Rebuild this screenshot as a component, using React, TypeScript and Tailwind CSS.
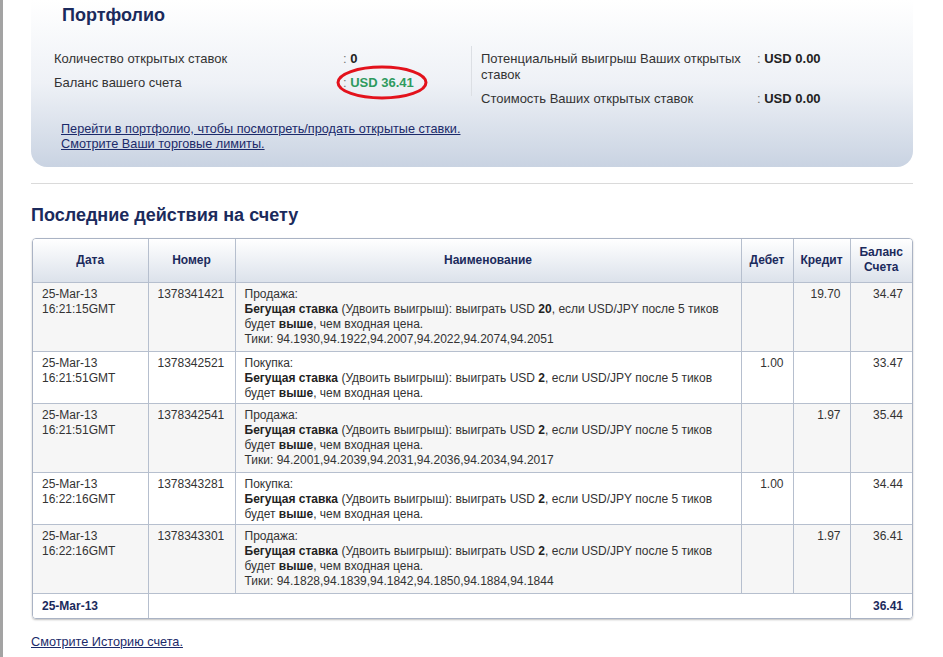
import React from 'react';

type Activity = {
  date: string;
  time: string;
  ref: string;
  action: string;
  payout: string;
  ticks?: string;
  debit?: string;
  credit?: string;
  balance: string;
};

const activities: Activity[] = [
  {
    date: '25-Mar-13',
    time: '16:21:15GMT',
    ref: '1378341421',
    action: 'Продажа:',
    payout: '20',
    ticks: '94.1930,94.1922,94.2007,94.2022,94.2074,94.2051',
    credit: '19.70',
    balance: '34.47',
  },
  {
    date: '25-Mar-13',
    time: '16:21:51GMT',
    ref: '1378342521',
    action: 'Покупка:',
    payout: '2',
    debit: '1.00',
    balance: '33.47',
  },
  {
    date: '25-Mar-13',
    time: '16:21:51GMT',
    ref: '1378342541',
    action: 'Продажа:',
    payout: '2',
    ticks: '94.2001,94.2039,94.2031,94.2036,94.2034,94.2017',
    credit: '1.97',
    balance: '35.44',
  },
  {
    date: '25-Mar-13',
    time: '16:22:16GMT',
    ref: '1378343281',
    action: 'Покупка:',
    payout: '2',
    debit: '1.00',
    balance: '34.44',
  },
  {
    date: '25-Mar-13',
    time: '16:22:16GMT',
    ref: '1378343301',
    action: 'Продажа:',
    payout: '2',
    ticks: '94.1828,94.1839,94.1842,94.1850,94.1884,94.1844',
    credit: '1.97',
    balance: '36.41',
  },
];

const font = { fontFamily: '"Liberation Sans", Arial, sans-serif' };

function Value({ children, green }: { children: React.ReactNode; green?: boolean }) {
  return (
    <span>
      <span className="text-[#777]">: </span>
      <b className={green ? 'text-[#2e9a5e]' : 'text-[#222]'}>{children}</b>
    </span>
  );
}

function Portfolio() {
  return (
    <div className="rounded-b-[16px] bg-gradient-to-b from-white via-[#eef1f6] to-[#c9d3e2] pl-[23px] pt-[4px] pb-[15px]">
      <h1 className="ml-[8px] text-[18px] font-bold leading-[22px] text-[#1b2a5c]">Портфолио</h1>

      <div className="mt-[25px] flex items-start text-[13px] leading-[16px] text-[#333]">
        {/* left column */}
        <div className="flex w-[417px] flex-col gap-[8px]">
          <div className="flex">
            <span className="w-[289px]">Количество открытых ставок</span>
            <Value>0</Value>
          </div>
          <div className="flex">
            <span className="w-[289px]">Баланс вашего счета</span>
            <span className="relative">
              <Value green>USD 36.41</Value>
              <svg
                className="absolute left-[-7px] top-[-10px]"
                width="92"
                height="35"
                viewBox="0 0 92 35"
              >
                <ellipse cx="46" cy="17.5" rx="44" ry="15.5" fill="none" stroke="#e3121c" strokeWidth="3" />
              </svg>
            </span>
          </div>
        </div>

        <div className="mt-[-5px] h-[50px] w-px bg-[#dcdfe4]" />

        {/* right column */}
        <div className="ml-[9px] flex flex-col gap-[8px]">
          <div className="flex">
            <span className="w-[276px]">
              Потенциальный выигрыш Ваших открытых
              <br />
              ставок
            </span>
            <Value>USD 0.00</Value>
          </div>
          <div className="flex">
            <span className="w-[276px]">Стоимость Ваших открытых ставок</span>
            <Value>USD 0.00</Value>
          </div>
        </div>
      </div>

      <div className="ml-[7px] mt-[15px] flex flex-col text-[12.7px] leading-[15px] text-[#1b2a6a]">
        <a href="#" className="underline">
          Перейти в портфолио, чтобы посмотреть/продать открытые ставки.
        </a>
        <a href="#" className="underline">
          Смотрите Ваши торговые лимиты.
        </a>
      </div>
    </div>
  );
}

const th =
  'border-l border-[#b6bfce] first:border-l-0 font-bold text-[#1b2a5c] text-center align-middle px-[6px]';
const td = 'border-l border-t border-[#b6bfce] first:border-l-0 align-top px-[9px] pt-[4px] pb-[2px]';

function ActivityTable() {
  return (
    <div className="overflow-hidden rounded-[4px] border border-[#aab3c4] shadow-[0_1px_2px_rgba(0,0,0,0.25)]">
      <table className="w-full border-collapse text-[12px] leading-[15px] text-[#333]">
        <colgroup>
          <col className="w-[115px]" />
          <col className="w-[87px]" />
          <col />
          <col className="w-[52px]" />
          <col className="w-[57px]" />
          <col className="w-[62px]" />
        </colgroup>
        <thead>
          <tr className="h-[43px] bg-gradient-to-b from-white to-[#dce2eb]">
            <th className={th}>Дата</th>
            <th className={th}>Номер</th>
            <th className={th}>Наименование</th>
            <th className={th}>Дебет</th>
            <th className={th}>Кредит</th>
            <th className={th}>
              Баланс
              <br />
              Счета
            </th>
          </tr>
        </thead>
        <tbody>
          {activities.map((a, i) => (
            <tr key={a.ref} className={i % 2 === 0 ? 'bg-[#f6f6f6]' : 'bg-white'}>
              <td className={td}>
                {a.date}
                <br />
                {a.time}
              </td>
              <td className={td}>{a.ref}</td>
              <td className={td}>
                {a.action}
                <br />
                <b className="text-[#222]">Бегущая ставка</b> (Удвоить выигрыш): выиграть USD{' '}
                <b className="text-[#222]">{a.payout}</b>, если USD/JPY после 5 тиков
                <br />
                будет <b className="text-[#222]">выше</b>, чем входная цена.
                {a.ticks && <div className="pb-[2px]">Тики: {a.ticks}</div>}
              </td>
              <td className={`${td} text-right`}>{a.debit}</td>
              <td className={`${td} text-right`}>{a.credit}</td>
              <td className={`${td} text-right`}>{a.balance}</td>
            </tr>
          ))}
          <tr className="bg-white font-bold text-[#1b2a5c]">
            <td className="border-t border-[#b6bfce] px-[9px] pt-[5px] pb-[4px]">25-Mar-13</td>
            <td colSpan={4} className="border-l border-t border-[#b6bfce]" />
            <td className="border-l border-t border-[#b6bfce] px-[9px] pt-[5px] pb-[4px] text-right">36.41</td>
          </tr>
        </tbody>
      </table>
    </div>
  );
}

export default function App() {
  return (
    <div className="min-h-screen border-l-[3px] border-[#a3a3a3] bg-white pl-[28px]" style={font}>
      <div className="w-[882px]">
        <Portfolio />
        <div className="mt-[16px] h-px bg-[#dadada]" />
        <h2 className="mt-[20px] text-[18px] font-bold leading-[22px] text-[#1b2a5c]">
          Последние действия на счету
        </h2>
        <div className="mt-[12px] pl-px">
          <ActivityTable />
        </div>
        <a href="#" className="mt-[16px] inline-block text-[12.7px] leading-[15px] text-[#1b2a6a] underline">
          Смотрите Историю счета.
        </a>
      </div>
    </div>
  );
}
